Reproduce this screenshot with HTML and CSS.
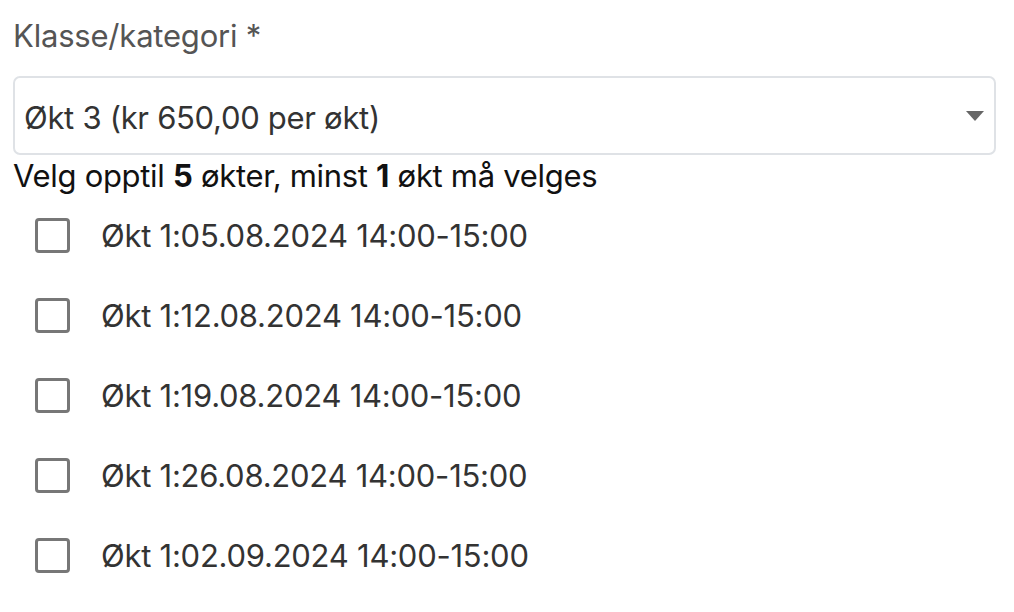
FILE: index.html
```html
<!DOCTYPE html>
<html lang="no">
<head>
<meta charset="utf-8">
<link rel="stylesheet" href="styles.css">
</head>
<body>
<div class="field">
  <label class="field-label">Klasse/kategori *</label>
  <div class="select">
    <span class="select-value">Økt 3 (kr 650,00 per økt)</span>
    <span class="select-arrow"></span>
  </div>
  <div class="hint">Velg opptil <b>5</b> økter, minst <b>1</b> økt må velges</div>
  <ul class="sessions">
    <li class="session"><span class="box"></span><span class="session-text">Økt 1:05.08.2024 14:00-15:00</span></li>
    <li class="session"><span class="box"></span><span class="session-text">Økt 1:12.08.2024 14:00-15:00</span></li>
    <li class="session"><span class="box"></span><span class="session-text">Økt 1:19.08.2024 14:00-15:00</span></li>
    <li class="session"><span class="box"></span><span class="session-text">Økt 1:26.08.2024 14:00-15:00</span></li>
    <li class="session"><span class="box"></span><span class="session-text">Økt 1:02.09.2024 14:00-15:00</span></li>
  </ul>
</div>
</body>
</html>
```
FILE: styles.css
```css
html, body {
  margin: 0;
  padding: 0;
  background: #fff;
}
body {
  font-family: Inter, "Noto Sans", sans-serif;
  color: #222;
}
.field {
  padding: 16px 18px 0 13px;
  display: flex;
  flex-direction: column;
}
.field-label {
  font-size: 31px;
  line-height: 40px;
  color: #555;
  letter-spacing: -0.2px;
}
.select {
  margin-top: 20px;
  height: 79px;
  box-sizing: border-box;
  border: 2px solid #dfe2e6;
  border-radius: 7px;
  display: flex;
  align-items: center;
  padding: 3px 10px 0 9px;
}
.select-value {
  flex: 1;
  font-size: 31px;
  color: #333;
  letter-spacing: -0.3px;
}
.select-arrow {
  width: 0;
  height: 0;
  border-left: 9px solid transparent;
  border-right: 9px solid transparent;
  border-top: 10px solid #666;
  margin-bottom: 3px;
}
.hint {
  font-size: 31px;
  line-height: 42px;
  color: #111;
  letter-spacing: -0.3px;
}
.hint b { font-weight: 700; }
.sessions {
  list-style: none;
  margin: -2px 0 0;
  padding: 0 0 0 22px;
}
.session {
  height: 80px;
  display: flex;
  align-items: center;
}
.box {
  width: 35px;
  height: 35px;
  box-sizing: border-box;
  border: 3px solid #777;
  border-radius: 4px;
  flex: none;
}
.session-text {
  margin-left: 31px;
  font-size: 31px;
  color: #333;
  letter-spacing: -0.25px;
}
```
